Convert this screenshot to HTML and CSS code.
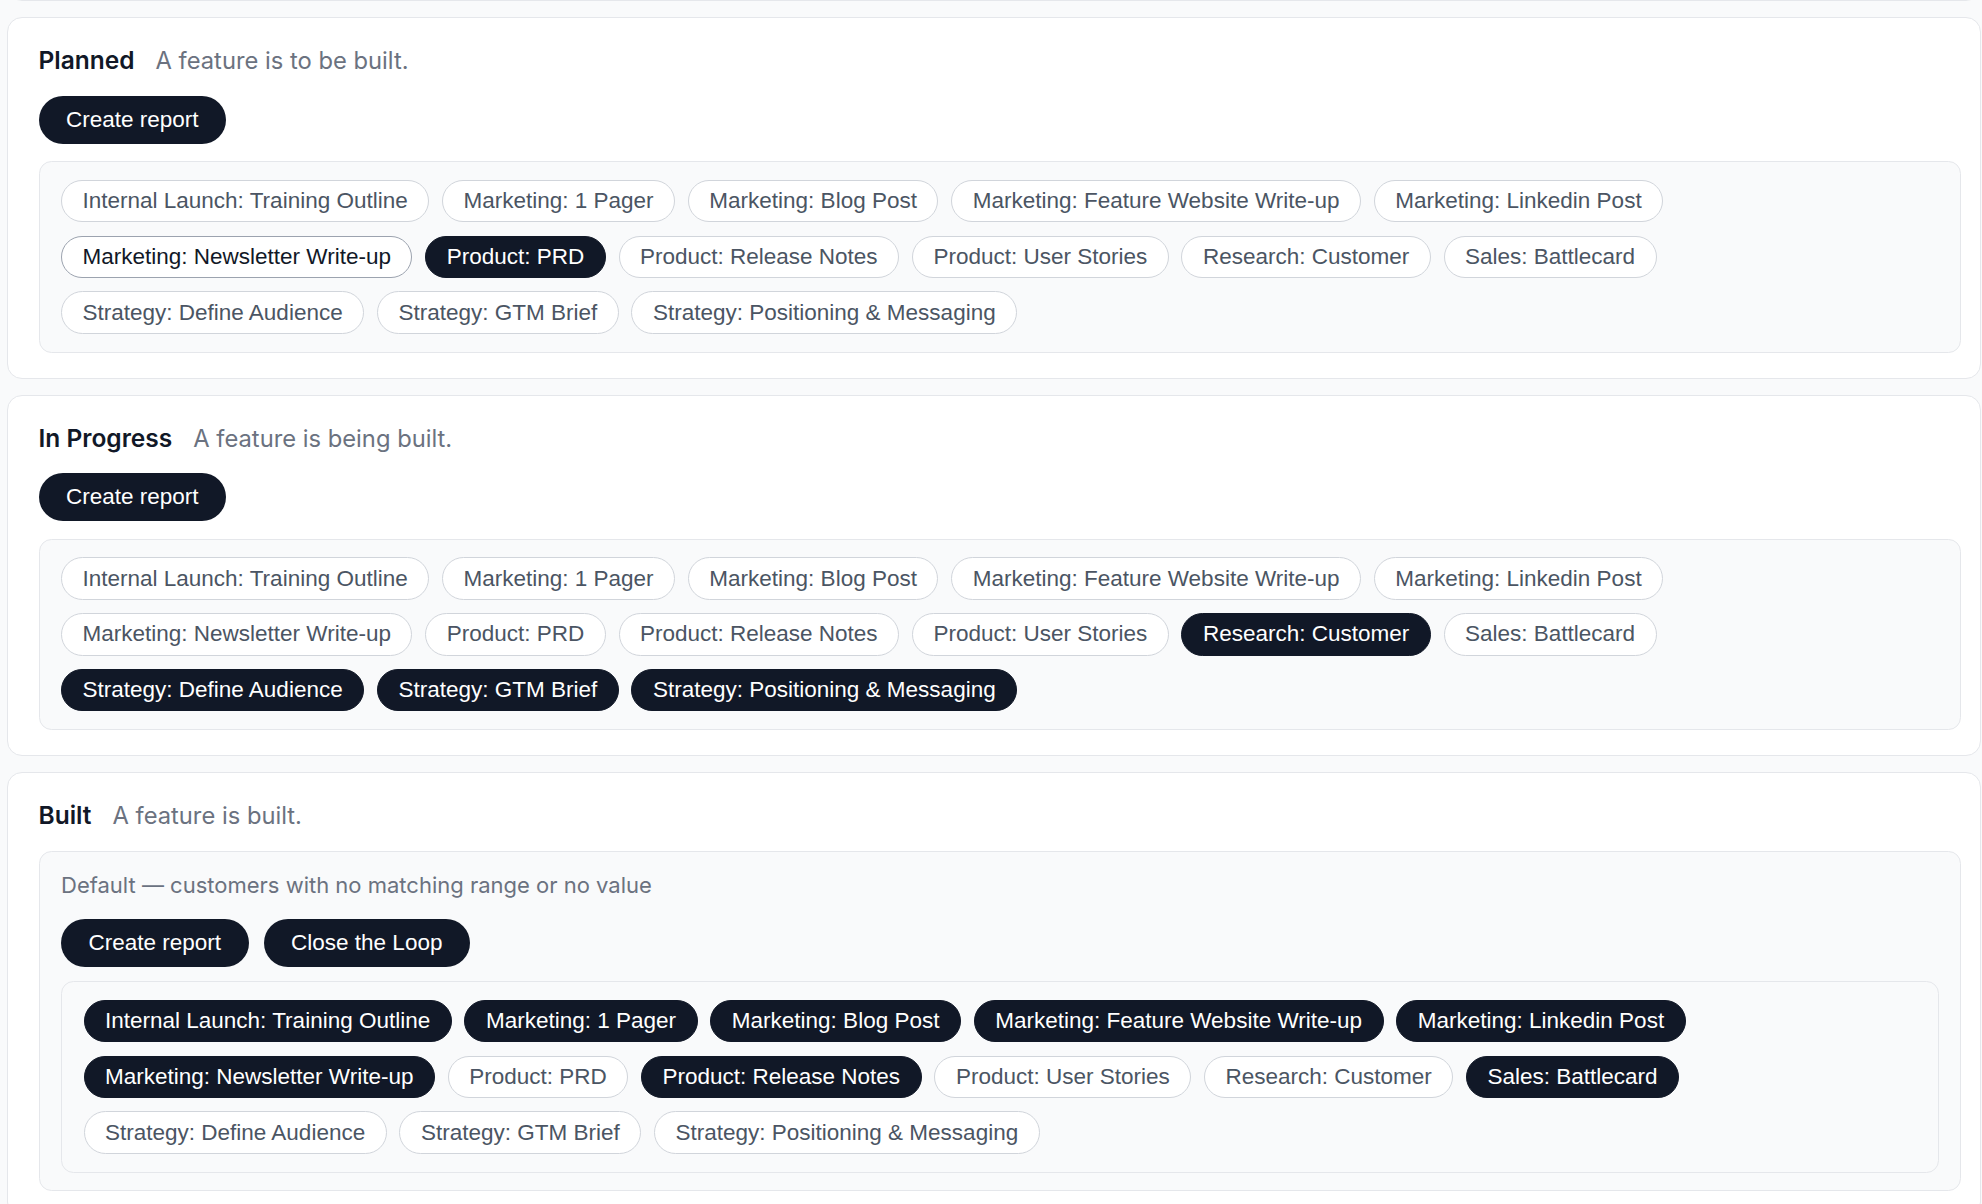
FILE: index.html
```html
<!DOCTYPE html>
<html>
<head lang="en">
    <meta charset="UTF-8">
    <title>Feature stages</title>
    <link rel="stylesheet" href="styles.css">
</head>
<body>
<div class="page">
    <div class="card card-stub"></div>

    <div class="card">
        <div class="stage-head">
            <span class="stage-name">Planned</span>
            <span class="stage-desc">A feature is to be built.</span>
        </div>
        <div class="actions">
            <button class="btn">Create report</button>
        </div>
        <div class="tag-box">
            <span class="tag">Internal Launch: Training Outline</span>
            <span class="tag">Marketing: 1 Pager</span>
            <span class="tag">Marketing: Blog Post</span>
            <span class="tag">Marketing: Feature Website Write-up</span>
            <span class="tag">Marketing: Linkedin Post</span>
            <span class="tag tag-hover">Marketing: Newsletter Write-up</span>
            <span class="tag tag-on">Product: PRD</span>
            <span class="tag">Product: Release Notes</span>
            <span class="tag">Product: User Stories</span>
            <span class="tag">Research: Customer</span>
            <span class="tag">Sales: Battlecard</span>
            <span class="tag">Strategy: Define Audience</span>
            <span class="tag">Strategy: GTM Brief</span>
            <span class="tag">Strategy: Positioning &amp; Messaging</span>
        </div>
    </div>

    <div class="card">
        <div class="stage-head">
            <span class="stage-name">In Progress</span>
            <span class="stage-desc">A feature is being built.</span>
        </div>
        <div class="actions">
            <button class="btn">Create report</button>
        </div>
        <div class="tag-box">
            <span class="tag">Internal Launch: Training Outline</span>
            <span class="tag">Marketing: 1 Pager</span>
            <span class="tag">Marketing: Blog Post</span>
            <span class="tag">Marketing: Feature Website Write-up</span>
            <span class="tag">Marketing: Linkedin Post</span>
            <span class="tag">Marketing: Newsletter Write-up</span>
            <span class="tag">Product: PRD</span>
            <span class="tag">Product: Release Notes</span>
            <span class="tag">Product: User Stories</span>
            <span class="tag tag-on">Research: Customer</span>
            <span class="tag">Sales: Battlecard</span>
            <span class="tag tag-on">Strategy: Define Audience</span>
            <span class="tag tag-on">Strategy: GTM Brief</span>
            <span class="tag tag-on">Strategy: Positioning &amp; Messaging</span>
        </div>
    </div>

    <div class="card">
        <div class="stage-head">
            <span class="stage-name">Built</span>
            <span class="stage-desc">A feature is built.</span>
        </div>
        <div class="range-box">
            <div class="range-label">Default — customers with no matching range or no value</div>
            <div class="actions">
                <button class="btn">Create report</button>
                <button class="btn">Close the Loop</button>
            </div>
            <div class="tag-box">
                <span class="tag tag-on">Internal Launch: Training Outline</span>
                <span class="tag tag-on">Marketing: 1 Pager</span>
                <span class="tag tag-on">Marketing: Blog Post</span>
                <span class="tag tag-on">Marketing: Feature Website Write-up</span>
                <span class="tag tag-on">Marketing: Linkedin Post</span>
                <span class="tag tag-on">Marketing: Newsletter Write-up</span>
                <span class="tag">Product: PRD</span>
                <span class="tag tag-on">Product: Release Notes</span>
                <span class="tag">Product: User Stories</span>
                <span class="tag">Research: Customer</span>
                <span class="tag tag-on">Sales: Battlecard</span>
                <span class="tag">Strategy: Define Audience</span>
                <span class="tag">Strategy: GTM Brief</span>
                <span class="tag">Strategy: Positioning &amp; Messaging</span>
            </div>
        </div>
    </div>
</div>
</body>
</html>
```

FILE: styles.css
```css
html, body{
    margin: 0;
    padding: 0;
    background: #f9fafb;
    overflow: hidden;
}
.page{
    padding: 0 1px 0 7px;
    display: flex;
    flex-direction: column;
    gap: 16px;
    font-family: Inter, "Liberation Sans", sans-serif;
    color: #111827;
}
.card{
    background: #fff;
    border: 1.25px solid #e5e7eb;
    border-radius: 15px;
    padding: 25px 18.75px 25px 30.5px;
    display: flex;
    flex-direction: column;
    gap: 17.5px;
}
.card-stub{
    height: 30px;
    padding: 0;
    margin-top: -31px;
}

/* stage heading */
.stage-head{
    display: flex;
    align-items: baseline;
    gap: 21px;
    line-height: 35px;
}
.stage-name{
    font-size: 24.5px;
    font-weight: 600;
    color: #111827;
}
.stage-desc{
    font-size: 23.75px;
    color: #6b7280;
}

/* buttons */
.actions{
    display: flex;
    gap: 15px;
}
.btn{
    font-family: "Liberation Sans", Arial, sans-serif;
    font-size: 22.5px;
    line-height: 28px;
    padding: 10px 27.5px;
    background: #111827;
    color: #fff;
    border: 0;
    border-radius: 999px;
    cursor: pointer;
}

/* tags */
.tag-box{
    background: #f9fafb;
    border: 1.25px solid #e5e7eb;
    border-radius: 12.5px;
    padding: 17.75px 21.5px;
    display: flex;
    flex-wrap: wrap;
    gap: 13.25px 12.75px;
}
.tag{
    font-family: "Liberation Sans", Arial, sans-serif;
    font-size: 22.5px;
    line-height: 28px;
    padding: 6.25px 20.5px;
    background: #fff;
    color: #4b5563;
    border: 1.25px solid #d1d5db;
    border-radius: 999px;
    white-space: nowrap;
    cursor: pointer;
}
.tag-hover{
    border-color: #9ca3af;
    color: #111827;
}
.tag-on{
    background: #111827;
    border-color: #111827;
    color: #fff;
}

/* range group inside Built */
.range-box{
    background: #f9fafb;
    border: 1.25px solid #e5e7eb;
    border-radius: 12.5px;
    padding: 17.5px 21.5px 17px 21.5px;
    display: flex;
    flex-direction: column;
}
.range-label{
    font-size: 22px;
    line-height: 32px;
    color: #6b7280;
}
.range-box .actions{
    margin-top: 17.5px;
}
.range-box .tag-box{
    margin-top: 14.5px;
    background: #f9fafb;
}
```
